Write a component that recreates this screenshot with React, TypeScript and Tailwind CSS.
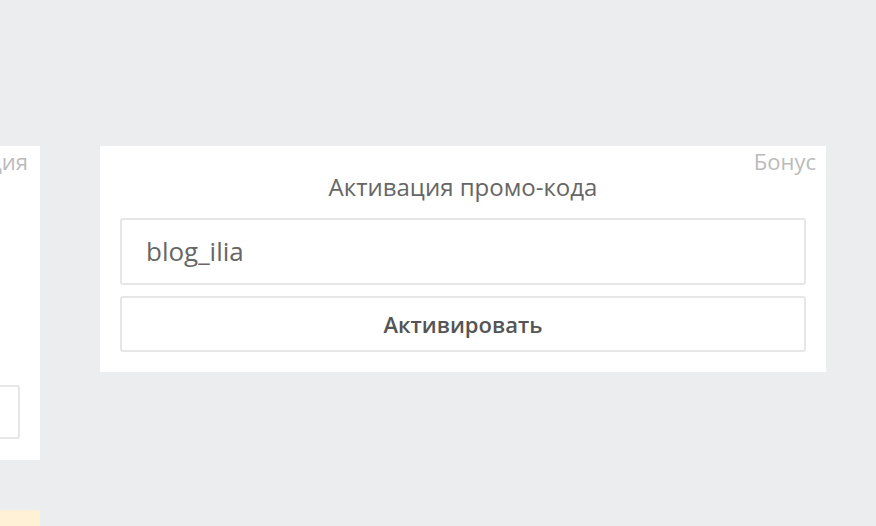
export default function App() {
  return (
    <div className="min-h-screen w-full overflow-hidden bg-[#ecedef] font-['Open_Sans',sans-serif]">
      <div className="flex items-start gap-[60px] pt-[146px]">
        {/* Left column - partially visible */}
        <div className="-ml-[260px] flex w-[300px] shrink-0 flex-col gap-[50px]">
          <div className="flex h-[314px] flex-col bg-white pr-[12px] pl-5">
            <div className="pt-[4px] text-right text-[22px] leading-[23px] text-[#bbbbbb]">
              Авторизация
            </div>
            <div className="mt-auto mb-[21px] mr-[8px] h-[54px] rounded-[3px] border-2 border-[#e6e6e6]" />
          </div>
          <div className="h-[40px] bg-[#fff1d6]" />
        </div>

        {/* Promo card */}
        <div className="flex w-[726px] shrink-0 flex-col bg-white px-5 pb-5">
          <div className="-mr-[10px] pt-[4px] text-right text-[22px] leading-[23px] text-[#bbbbbb]">
            Бонус
          </div>
          <div className="-mt-[1px] text-center text-[24px] leading-[30px] text-[#666666]">
            Активация промо-кода
          </div>
          <div className="mt-[16px] flex h-[67px] items-center rounded-[3px] border-2 border-[#e6e6e6] px-6">
            <span className="text-[26px] text-[#666666]">blog_ilia</span>
          </div>
          <button className="mt-[11px] flex h-[56px] items-center justify-center rounded-[3px] border-2 border-[#e6e6e6] bg-white text-[22px] font-semibold text-[#555555]">
            Активировать
          </button>
        </div>
      </div>
    </div>
  )
}
